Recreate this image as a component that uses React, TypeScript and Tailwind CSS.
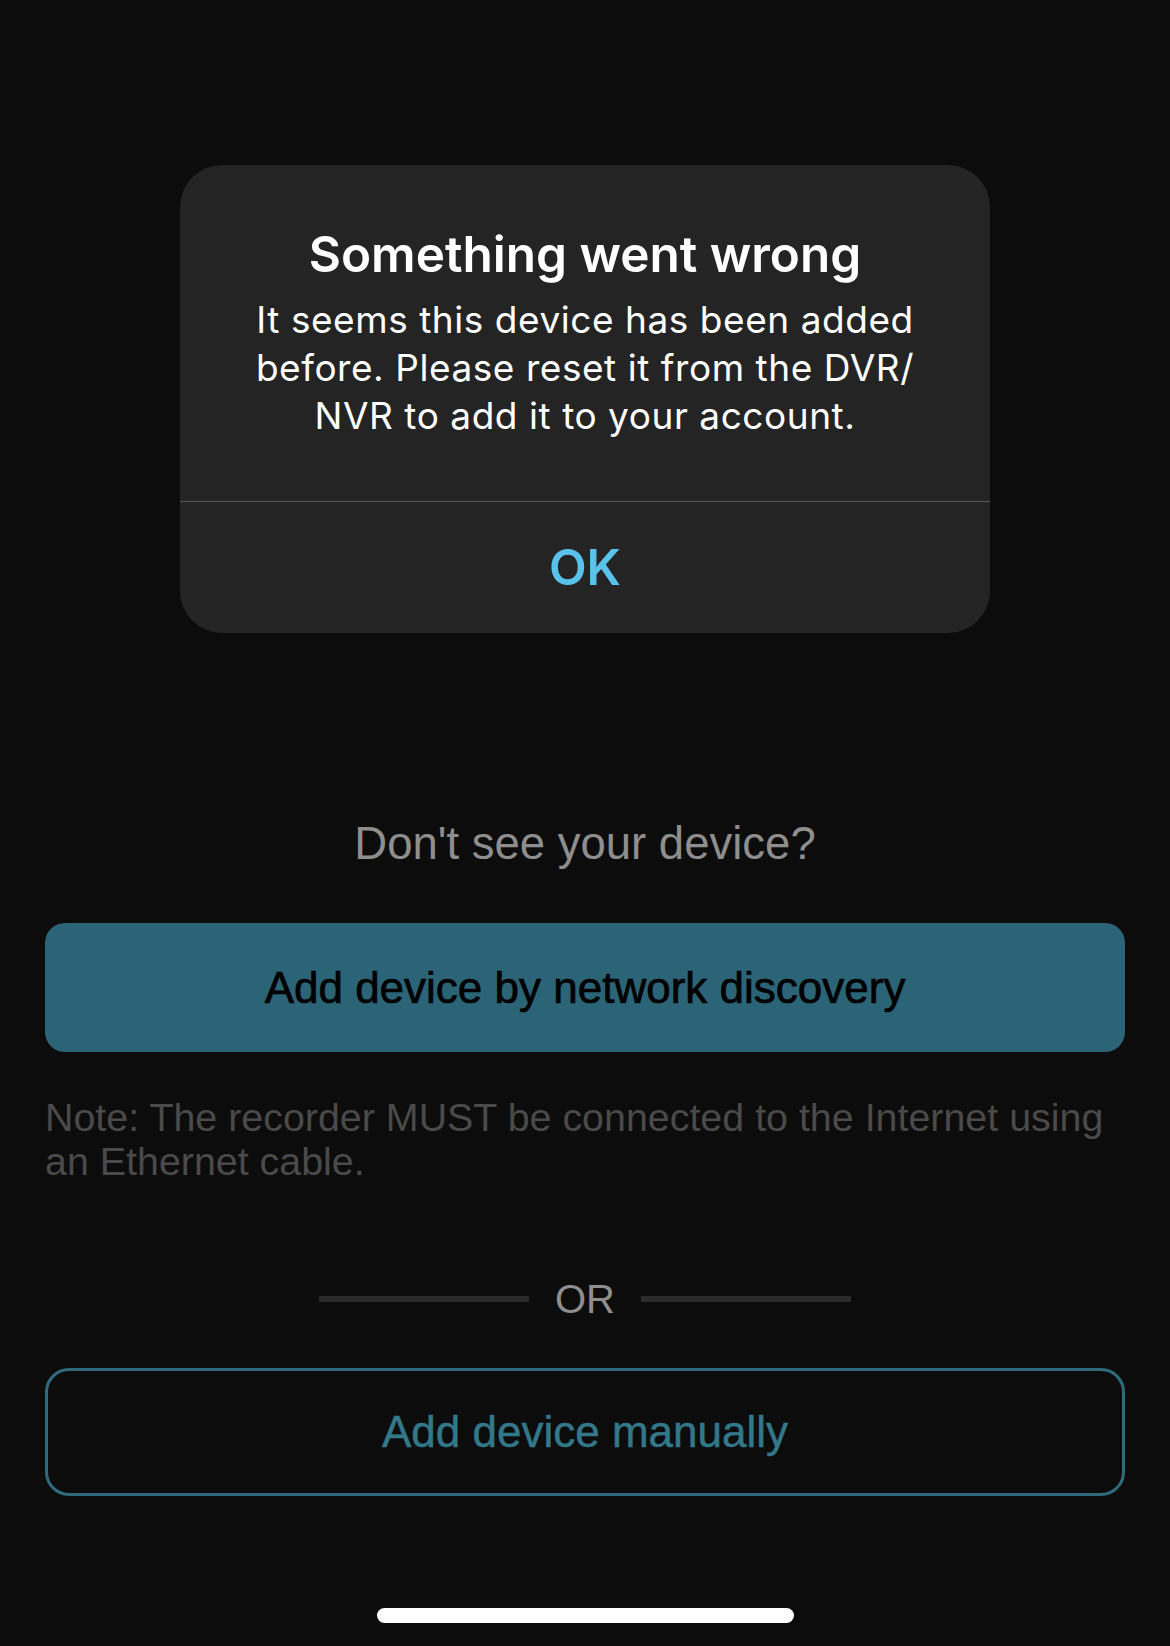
const Alert = () => {
  return (
    <div className="w-[810px] mx-auto rounded-[42px] bg-[#242424] overflow-hidden">
      <div className="pt-[60px] pb-[61px] px-[30px] flex flex-col items-center text-center text-white font-['Inter',sans-serif]">
        <h2 className="text-[49.5px] leading-[58px] font-semibold">Something went wrong</h2>
        <p className="mt-[13px] text-[37px] leading-[48px] tracking-[0.55px] w-[710px]">
          It seems this device has been added before. Please reset it from the DVR/ NVR to add it to your account.
        </p>
      </div>
      <div className="h-px bg-[#575757]" />
      <button className="w-full h-[131px] flex items-center justify-center text-[49px] leading-[49px] font-semibold text-[#5ac2ea] font-['Inter',sans-serif]">
        OK
      </button>
    </div>
  )
}

const App = () => {
  return (
    <div className="min-h-[1646px] bg-[#0c0c0c] flex flex-col font-['Liberation_Sans',Arial,sans-serif]">
      <div className="pt-[165px]">
        <Alert />
      </div>

      <div className="px-[45px] flex flex-col">
        <p className="mt-[185px] text-center text-[45.5px] leading-[52px] text-[#8e8e8e]">Don't see your device?</p>

        <button className="mt-[53px] h-[129px] w-full rounded-[20px] bg-[#2b6476] text-black text-[44px] leading-[44px] [-webkit-text-stroke:0.7px_black]">
          Add device by network discovery
        </button>

        <p className="mt-[43px] text-[39.4px] leading-[44px] text-[#4a4a4a]">
          Note: The recorder MUST be connected to the Internet using an Ethernet cable.
        </p>

        <div className="mt-[93px] h-[46px] flex items-center justify-center gap-[26px]">
          <div className="w-[210px] h-[6px] bg-[#2b2b2b]" />
          <span className="text-[40px] leading-[46px] text-[#8e8e8e]">OR</span>
          <div className="w-[210px] h-[6px] bg-[#2b2b2b]" />
        </div>

        <button className="mt-[46px] h-[128px] w-full rounded-[24px] border-[3.5px] border-[#2f6b7b] text-[#337889] text-[44px] leading-[44px] [-webkit-text-stroke:0.5px_#337889]">
          Add device manually
        </button>
      </div>

      <div className="mt-[112px] mx-auto w-[417px] h-[15px] rounded-full bg-white" />
    </div>
  )
}

export default App
